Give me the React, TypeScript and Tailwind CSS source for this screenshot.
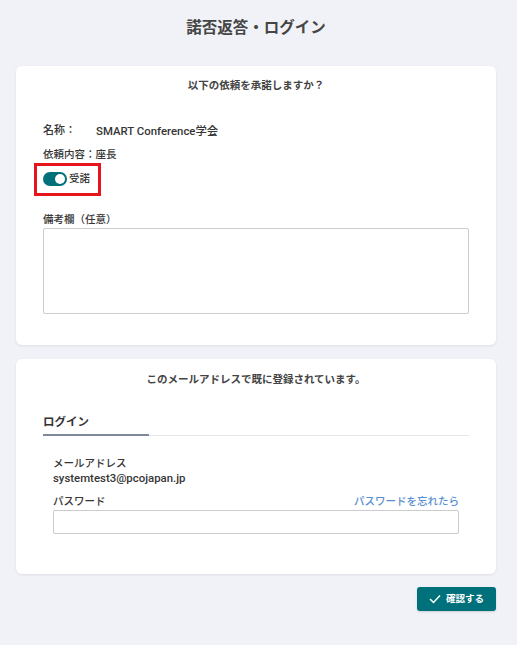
import React from "react";

export default function App() {
  const font = { fontFamily: "Roboto, 'Noto Sans CJK JP', sans-serif" };
  return (
    <div style={font} className="min-h-[645px] w-full bg-[#f1f2f7] text-[#363636] pl-4 pr-[21px] pb-8">
      <h1 className="pt-[19px] h-[18px] box-content leading-[18px] text-center text-[15.5px] font-bold text-[#454545]">
        諾否返答・ログイン
      </h1>

      <div className="mt-[29px] bg-white rounded-[6px] shadow-[0_1px_3px_rgba(0,0,0,0.08)] px-[27px] pt-[11px] pb-[31px]">
        <div className="h-[18px] leading-[18px] text-center text-[10.5px] font-bold text-[#444]">
          以下の依頼を承諾しますか？
        </div>
        <div className="mt-[27px] h-[18px] leading-[18px] text-[11px] font-medium flex">
          <span className="w-[53px]">名称：</span>
          <span className="text-[11.4px]">SMART Conference学会</span>
        </div>
        <div className="mt-[6px] h-[18px] leading-[18px] text-[10.5px] font-medium">
          依頼内容：座長
        </div>
        <div className="mt-[6px] h-[18px] flex items-center relative">
          <div className="w-[24px] h-[14px] rounded-full bg-[#00707a] flex items-center justify-end pr-[2px]">
            <div className="w-[10px] h-[10px] rounded-full bg-white" />
          </div>
          <span className="ml-[2px] text-[10.5px] font-medium leading-[18px]">受諾</span>
          <div className="absolute left-[-9px] top-[-7px] w-[67px] h-[33px] border-[3px] border-[#e8141b]" />
        </div>
        <div className="mt-[23px] h-[17px] leading-[17px] text-[10.5px] font-medium">
          備考欄（任意）
        </div>
        <textarea className="block w-full h-[86px] border border-[#cccccc] rounded-[2px] resize-none outline-none" />
      </div>

      <div className="mt-[14px] bg-white rounded-[6px] shadow-[0_1px_3px_rgba(0,0,0,0.08)] px-[27px] pt-[12px] pb-[40px]">
        <div className="h-[18px] leading-[18px] text-center text-[10.5px] font-bold text-[#444]">
          このメールアドレスで既に登録されています。
        </div>
        <div className="mt-[24px] border-b border-[#e6e7ea] flex">
          <div className="w-[106px] border-b-2 border-[#7d889b] -mb-px pb-[3px] box-content leading-[18px] text-[11.5px] font-bold text-[#333]" style={{ height: 18 }}>
            ログイン
          </div>
        </div>
        <div className="px-[10px]">
          <div className="mt-[20px] h-[15px] leading-[15px] text-[10.5px] font-medium">メールアドレス</div>
          <div className="h-[15px] leading-[15px] text-[11.4px] font-medium">systemtest3@pcojapan.jp</div>
          <div className="mt-[8px] h-[16px] leading-[16px] flex justify-between text-[10.5px] font-medium">
            <span>パスワード</span>
            <span className="text-[#5a8fd2]">パスワードを忘れたら</span>
          </div>
          <input className="block w-full h-[24px] border border-[#cccccc] rounded-[2px] outline-none" />
        </div>
      </div>

      <div className="mt-[13px] flex justify-end">
        <button className="w-[79px] h-[24px] rounded-[3px] bg-[#00707a] shadow-[0_1px_2px_rgba(0,0,0,0.15)] text-white text-[9.5px] font-bold flex items-center justify-center gap-[5px]">
          <svg width="12" height="10" viewBox="0 0 12 10" fill="none">
            <path d="M1 5 L4.5 8.5 L11 1.5" stroke="white" strokeWidth="1.5" />
          </svg>
          <span className="leading-none">確認する</span>
        </button>
      </div>
    </div>
  );
}
